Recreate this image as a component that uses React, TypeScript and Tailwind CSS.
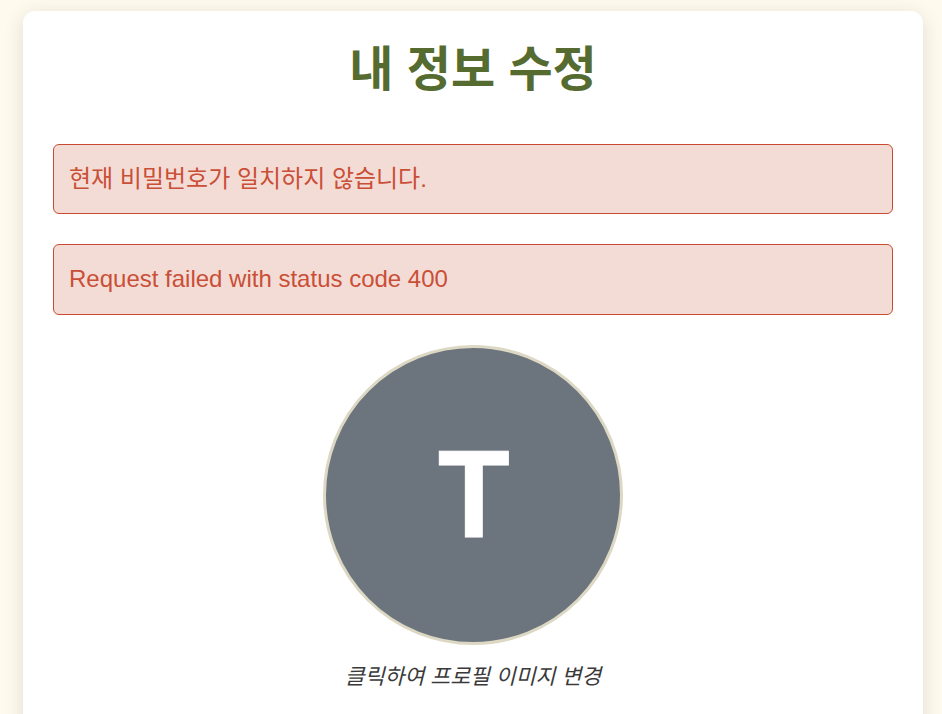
const messages = [
  { text: "현재 비밀번호가 일치하지 않습니다.", box: "h-[70px]" },
  { text: "Request failed with status code 400", box: "h-[71px] pb-px" },
];

export default function App() {
  return (
    <div className="h-[714px] overflow-hidden bg-[#fffaee] pl-[23px] pr-[19px] pt-[11px] font-['Liberation_Sans','Noto_Sans_CJK_KR',sans-serif]">
      <main className="flex h-[900px] flex-col items-center rounded-[12px] bg-white px-[30px] pt-[30px] shadow-[0_4px_20px_rgba(0,0,0,0.12)]">
        <h1 className="h-[73px] whitespace-nowrap text-[48px] font-bold leading-[58px] text-[#556b2f]">내 정보 수정</h1>
        <div className="mt-[30px] flex w-full flex-col gap-[30px]">
          {messages.map(({ text, box }) => (
            <div key={text} className={`flex items-center rounded-[6px] border border-[#c84b31] bg-[#f4dcd6] px-[15px] text-[24px] text-[#c94f36] ${box}`}>
              <span className="whitespace-nowrap">{text}</span>
            </div>
          ))}
        </div>
        <button className="mt-[30px] flex size-[300px] shrink-0 items-center justify-center rounded-full border-[3px] border-[#ddd8c4] bg-[#6c757d] text-[124px] font-bold leading-none text-white">
          <span className="translate-x-px -translate-y-[1.5px] scale-x-[0.945] [-webkit-text-stroke:1px_white]">T</span>
        </button>
        <p className="mt-[16px] whitespace-nowrap text-[21.6px] italic leading-[32px] text-[#3a3a3a]">클릭하여 프로필 이미지 변경</p>
      </main>
    </div>
  );
}
